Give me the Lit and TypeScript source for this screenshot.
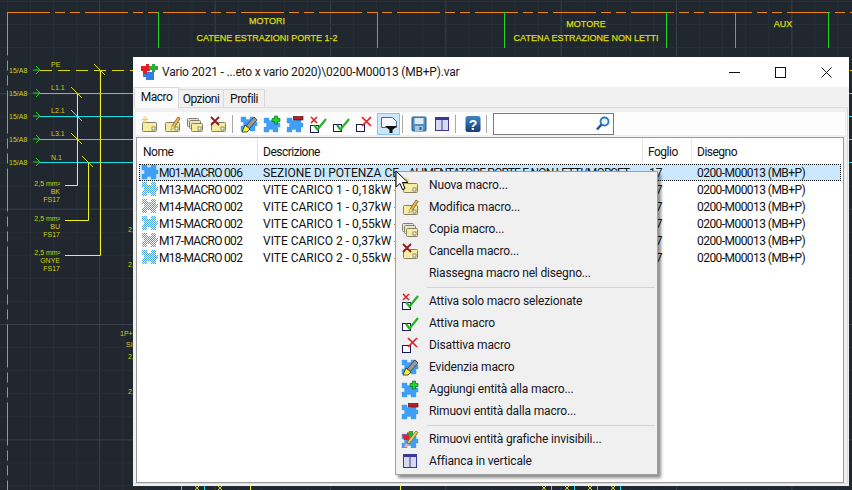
import { LitElement, html, css, svg } from "lit";
import { customElement } from "lit/decorators.js";

const wrap = (c: unknown) => html`<svg class="ic" viewBox="0 0 18 18" width="18" height="18">${c}</svg>`;

const card = (x = 2, y = 7, w = 15, h = 10, f = "#f8ec9e") => svg`
  <rect x=${x + .5} y=${y + .5} width=${w - 1} height=${h - 1} rx="1" fill=${f} stroke="#85806a"/>
  <rect x=${x + w - 5} y=${y + h - 5} width="3" height="3" fill="#fff" stroke="#77775f" stroke-width=".8"/>`;

const pz = "M1 1H6V3.500H10V1H15V6H17V10H15V15H10V12.500H6V15H1V10H3.500V6H1z";
const BLUE = "#3f9ff5";
const puzzle = (tx = 0, ty = 0, fill = BLUE) => svg`<path transform="translate(${tx} ${ty})" d=${pz} fill=${fill} stroke=${fill} stroke-width=".4" stroke-linejoin="round"/>`;
const inPuzzle = (x: number, y: number) => {
  const lobe = (x < 6 || x >= 10) && x >= 1 && x < 15;
  const mid = x >= 3 && x < 15 && y >= 6 && y < 10;
  const center = x >= 6 && x < 10 && y >= 4 && y < 12;
  const nub = x >= 15 && x < 17 && y >= 6 && y < 10;
  return (lobe && y >= 1 && y < 15 && (x >= 3 || y < 6 || y >= 10)) || mid || center || nub;
};
const dimCells: [number, number][] = [];
for (let y = 0; y < 16; y++) for (let x = 0; x < 18; x++) if ((x + y) % 2 === 0 && inPuzzle(x, y)) dimCells.push([x, y]);
const dimPuzzle = svg`${dimCells.map(([x, y]) => svg`<rect x=${x} y=${y} width="1" height="1" fill=${BLUE}/>`)}`;

const pencil = svg`<path d="M8 15l1-4 6-9 2.200 1.400-6 9.200z" fill="#f2b84a" stroke="#70582a" stroke-width=".8"/><path d="M8 15l1-4 2.200 1.600z" fill="#f8e8c0"/>`;
const redX = (x: number, y: number, s: number, c = "#ee1c1c", w = 1.7) => svg`<path d="M${x} ${y}l${s} ${s}M${x + s} ${y}l-${s} ${s}" stroke=${c} stroke-width=${w} fill="none"/>`;
const check = (dy = 0) => svg`<path transform="translate(0 ${dy})" d="M5 9l3.500 4.500L17 3" stroke="#22b32a" stroke-width="2.200" fill="none"/>`;
const box = (y: number) => svg`<rect x="1.500" y=${y + .5} width="8" height="7" fill="#fff" stroke="#1a1a55"/>`;

const icons: Record<string, () => unknown> = {
  nuova: () => wrap(svg`${card()}<path d="M5 1v7M1.500 4.500h7M2.500 2l5 5M7.500 2l-5 5" stroke="#e8d060" stroke-width=".9"/>`),
  modifica: () => wrap(svg`${card(2, 7, 15, 10)}${pencil}`),
  copia: () => wrap(svg`${card(1, 3, 12, 9, "#e6e6e0")}${card(3, 5, 12, 9, "#e9e6cc")}${card(5, 8, 12, 9)}`),
  cancella: () => wrap(svg`${card()}${redX(2, 2, 8, "#8e1c24", 1.8)}`),
  blank: () => wrap(""),
  solo: () => wrap(svg`${box(10)}${redX(2, 2, 6, "#d81c1c", 1.5)}${check(1)}`),
  attiva: () => wrap(svg`${box(9)}${check(1)}`),
  disattiva: () => wrap(svg`${box(9)}${redX(7, 2, 9)}`),
  evidenzia: () => wrap(svg`${puzzle(0, 1)}<path d="M6 11l8-9 3 3-8 9z" fill="#9a9a9a" stroke="#333" stroke-width=".8"/><path d="M2 17l3-7 5 4-3 3z" fill="#fff22e" stroke="#222" stroke-width=".8"/>`),
  aggiungi: () => wrap(svg`${puzzle(0, 2)}<path d="M11.500 1h3v2.500H17v3h-2.500V9h-3V6.500H9v-3h2.500z" fill="#1fd62c" stroke="#075f10" stroke-width=".6"/>`),
  rimuovi: () => wrap(svg`${puzzle(0, 2)}<rect x="7.500" y="1.500" width="9.500" height="3.500" fill="#c01a24" stroke="#3a0808" stroke-width=".6"/>`),
  grafiche: () => wrap(svg`${puzzle(0, 3)}<path d="M1 4.500h5v-2h3l.5 2.500-2 5H3z" fill="#ee1c2c"/><path d="M8 1h4v3l-2 3-3-2z" fill="#2cb02c"/><path d="M6 14l1-3 8-10 2 1.500-8 10.500z" fill="#e8d060" stroke="#6a5a20" stroke-width=".7"/><path d="M3 17l2-4 3 2-2 2z" fill="#f2a8a8"/>`),
  affianca: () => wrap(svg`<rect x="2.500" y="2.500" width="13" height="13" fill="#d8d8ee" stroke="#3a3a96"/><rect x="2" y="2" width="14" height="3" fill="#3a3a96"/><path d="M9 3v12.500" stroke="#3a3a96"/>`),
  filtro: () => wrap(svg`<path d="M1.500 2.500h11l4 4v6h-15z" fill="#f4f8fc" stroke="#5a6a7a"/><path d="M5 11h12l-4.500 4V18h-3v-3z" fill="#111"/>`),
  salva: () => wrap(svg`<rect x="2" y="2" width="14" height="14" rx="1" fill="#4f8fc5" stroke="#2a5c8c"/><rect x="4.500" y="3" width="9" height="6" fill="#dfe9f2"/><rect x="5" y="11" width="8" height="5" fill="#a8c8e2"/><rect x="9.500" y="12" width="2" height="3" fill="#2a5c8c"/>`),
  aiuto: () => wrap(svg`<defs><linearGradient id="hb" x1="0" y1="0" x2="0" y2="1"><stop offset="0" stop-color="#3f86c6"/><stop offset="1" stop-color="#123f78"/></linearGradient></defs><rect x="1.500" y="1" width="15" height="16" rx="2.500" fill="url(#hb)"/><text x="9" y="14.500" text-anchor="middle" font-family="Liberation Sans" font-weight="700" font-size="14" fill="#fff">?</text>`),
  cerca: () => wrap(svg`<circle cx="10.500" cy="6.500" r="4" fill="#e8f3fc" stroke="#2a78c0" stroke-width="1.800"/><path d="M7.500 9.500L3 14.500" stroke="#1f4f8f" stroke-width="2.400"/>`),
  titolo: () => wrap(svg`<rect x="6" y="9" width="8" height="8" fill="#2f7fe6"/><rect x="3" y="11" width="6" height="3" fill="#2f7fe6"/><path d="M1 3h5V1h3v2h1v5H7v3H3V8H1z" fill="#e81c24"/><path d="M9 3h3V1h3v2h3v4h-3v2h-3V7H9z" fill="#2cae3c"/>`),
};

const pzIcon = (active: boolean) => wrap(active ? puzzle(0, 0) : dimPuzzle);

const rows = [
  ["M01-MACRO 006", "SEZIONE DI POTENZA CE - ", "ALIMENTATORE PORTE E NON LETTI/MORSET"],
  ["M13-MACRO 002", "VITE CARICO 1 - 0,18kW - ", "MOTORE"],
  ["M14-MACRO 002", "VITE CARICO 1 - 0,37kW - ", "MOTORE"],
  ["M15-MACRO 002", "VITE CARICO 1 - 0,55kW - ", "MOTORE"],
  ["M17-MACRO 002", "VITE CARICO 2 - 0,37kW - ", "MOTORE"],
  ["M18-MACRO 002", "VITE CARICO 2 - 0,55kW - ", "MOTORE"],
];

type MenuEntry = { i?: string; t?: string; sep?: boolean };
const menu: MenuEntry[] = [
  { i: "nuova", t: "Nuova macro..." },
  { i: "modifica", t: "Modifica macro..." },
  { i: "copia", t: "Copia macro..." },
  { i: "cancella", t: "Cancella macro..." },
  { i: "blank", t: "Riassegna macro nel disegno..." },
  { sep: true },
  { i: "solo", t: "Attiva solo macro selezionate" },
  { i: "attiva", t: "Attiva macro" },
  { i: "disattiva", t: "Disattiva macro" },
  { i: "evidenzia", t: "Evidenzia macro" },
  { i: "aggiungi", t: "Aggiungi entità alla macro..." },
  { i: "rimuovi", t: "Rimuovi entità dalla macro..." },
  { sep: true },
  { i: "grafiche", t: "Rimuovi entità grafiche invisibili..." },
  { i: "affianca", t: "Affianca in verticale" },
];

const Y = "#d8d80c";
const canvas = () => {
  const g: unknown[] = [];
  for (let i = 0; i < 38; i++) {
    const x = 7.5 + i * 23.07;
    const maj = Math.round((x - 100) / 23.07) % 5 === 0;
    g.push(svg`<line x1=${x} y1="0" x2=${x} y2="490" stroke=${maj ? "#3a414d" : "#282f39"}/>`);
  }
  for (let i = 0; i < 23; i++) {
    const y = 1.5 + i * 23.07;
    const maj = Math.round((y - 324) / 23.07) % 5 === 0;
    g.push(svg`<line x1="0" y1=${y} x2="852" y2=${y} stroke=${maj ? "#3a414d" : "#282f39"}/>`);
  }
  const t = (x: number, y: number, s: string, anchor = "start") =>
    svg`<text class="small" x=${x} y=${y} text-anchor=${anchor}>${s}</text>`;
  const big = (x: number, y: number, s: string) =>
    svg`<text class="big" x=${x} y=${y} text-anchor="middle">${s}</text>`;
  const arrow = (y: number) => svg`<path d="M33 ${y}h7M36 ${y - 4}l4 4-4 4" stroke="#22d422" fill="none"/><text class="small" x="9" y=${y + 2.500}>15/A8</text>`;
  const tick = (x: number, y: number) => svg`<path d="M${x - 6} ${y - 6}l11 11" stroke=${Y}/>`;
  return svg`
    ${g}
    <path d="M7 12.500H852" stroke="#f08410" stroke-width="1.200" stroke-dasharray="43 5 10 5 10 5"/>
    <path d="M7.500 12.500V490" stroke="#f08410" stroke-dasharray="43 5 10 5 10 5"/>
    ${[158, 377, 504, 666, 735, 828].map((x) => svg`<line x1=${x + .5} y1="12" x2=${x + .5} y2="48" stroke="#22d422"/>`)}
    ${big(267, 24, "MOTORI")}
    ${big(267, 41, "CATENE ESTRAZIONI PORTE 1-2")}
    ${big(586, 27, "MOTORE")}
    ${big(586, 41, "CATENA ESTRAZIONE NON LETTI")}
    ${big(783, 27, "AUX")}
    ${[70, 93, 116, 139, 162].map(arrow)}
    <path d="M40 70.500H133" stroke=${Y} stroke-dasharray="12 6"/>
    ${[93, 116, 139, 162].map((y) => svg`<line x1="40" y1=${y + .5} x2="852" y2=${y + .5} stroke="#18e0e0"/>`)}
    <line x1="850" y1="70.500" x2="852" y2="70.500" stroke=${Y}/>
    ${t(51, 67, "PE")}${t(51, 90, "L1.1")}${t(51, 113, "L2.1")}${t(51, 136, "L3.1")}${t(51, 160, "N.1")}
    <path d="M100.500 70V255.500H65M77.500 93V185.500H65M88.500 162V220.500H65" stroke="#f2f21c" fill="none"/>
    ${tick(100, 70)}${tick(77, 93)}${tick(77, 116)}${tick(77, 139)}${tick(88, 162)}
    ${t(60, 186, "2,5 mm²", "end")}${t(60, 194, "BK", "end")}${t(60, 202, "FS17", "end")}
    ${t(60, 221, "2,5 mm²", "end")}${t(60, 229, "BU", "end")}${t(60, 237, "FS17", "end")}
    ${t(60, 255, "2,5 mm²", "end")}${t(60, 263, "GNYE", "end")}${t(60, 271, "FS17", "end")}
    ${[232, 267, 359, 394].map((y) => t(128, y, "2,"))}
    ${t(120, 336, "1P+N")}${t(126, 347, "SIE")}
    ${[181.500, 204.500, 551.500, 574.500, 597.500, 620.500].map((x) => svg`<line x1=${x} y1="486" x2=${x} y2="490" stroke="#18e0e0"/>`)}
    ${[250.500, 400.500].map((x) => svg`<line x1=${x} y1="486" x2=${x} y2="490" stroke="#f2f21c"/>`)}
    ${[197, 220, 544, 567, 590, 613].map((x) => svg`<path d="M${x - 2} 486l4 4M${x + 2} 486l-4 4" stroke=${Y}/>`)}
  `;
};

@customElement("app-root")
export class AppRoot extends LitElement {
  static styles = css`
    :host { display: block; position: relative; width: 852px; height: 490px; overflow: hidden; background: #20272f; font-family: Roboto, sans-serif; font-size: 12px; color: #111; }
    .canvas { position: absolute; inset: 0; display: block; }
    .canvas text { font-family: "Liberation Sans", sans-serif; }
    .canvas .big { font-size: 9px; fill: #dcdc0c; stroke: #dcdc0c; stroke-width: .25px; }
    .canvas .small { font-size: 7px; fill: #cfcf10; }
    .window { position: absolute; left: 133px; top: 57px; width: 716px; height: 429px; background: #f0f0f0; display: flex; flex-direction: column; }
    .title { height: 30px; background: #fff; display: flex; align-items: center; flex: none; }
    .title .logo { margin: 0 4px 0 7px; display: flex; }
    .title .text { flex: 1; white-space: nowrap; color: #1a1a1a; letter-spacing: -.19px; }
    .winbtn { width: 46px; height: 30px; display: flex; align-items: center; justify-content: center; flex: none; }
    .tabs { height: 20px; display: flex; align-items: flex-end; flex: none; padding-left: 1px; position: relative; z-index: 1; letter-spacing: -.5px; }
    .tab { height: 18px; display: flex; align-items: center; justify-content: center; background: #f0f0f0; border: 1px solid #d9d9d9; border-bottom: none; box-sizing: border-box; margin-left: -1px; }
    .tab.active { height: 21px; margin-bottom: -1px; background: #fbfbfb; width: 45px; margin-left: 0; padding-bottom: 2px; }
    .tab.o { width: 46px; }
    .tab.p { width: 42px; }
    .pane { flex: 1; margin: 0 1px 2px 1px; border: 1px solid #dcdcdc; border-left: none; padding: 4px 2px 0 2px; display: flex; flex-direction: column; min-height: 0; }
    .toolbar { height: 23px; background: #fdfdfd; display: flex; align-items: center; padding-left: 1.500px; flex: none; margin-bottom: 2px; }
    .tb { width: 23px; height: 22px; display: flex; align-items: center; justify-content: center; flex: none; box-sizing: border-box; }
    .tb.sel { background: #cde6f9; border: 1px solid #8ec3ec; margin-left: 1.500px; }
    .sep { width: 1px; height: 18px; background: #a8a8a8; flex: none; }
    .sep.a { margin: 0 4.500px 0 2.500px; }
    .sep.c { margin: 0 4px 0 2px; }
    .sep.b { margin: 0 5px 0 2px; }
    .search { width: 121px; height: 22px; margin-left: .5px; box-sizing: border-box; border: 1px solid #7a7a7a; background: #fff; display: flex; align-items: center; justify-content: flex-end; padding-right: 1px; }
    .list { flex: 1; background: #fff; border: 1px solid #9a9a9a; min-height: 0; margin-right: 1px; }
    .head { height: 25px; display: grid; grid-template-columns: 121px 385px 49px 1fr; align-items: stretch; border-bottom: 1px solid #fff; letter-spacing: -.5px; }
    .head div { display: flex; align-items: center; padding: 2px 0 0 5px; border-right: 1px solid #e5e5e5; }
    .head div:first-child { padding-left: 6px; }
    .head div:last-child { border-right: none; }
    .rowbox { padding: 0 2px; }
    .row { height: 17px; display: grid; grid-template-columns: 124px 384px 50px 1fr; align-items: center; white-space: nowrap; box-sizing: border-box; }
    .row.sel { background: #cce8ff; outline: 1px dotted #111; outline-offset: -1px; }
    .cell { overflow: hidden; }
    .name { display: flex; align-items: center; padding-left: 2px; letter-spacing: -.7px; }
    .tail { letter-spacing: -.8px; }
    .fg { padding-left: 2px; }
    .dis { letter-spacing: -.55px; }
    .menu { position: absolute; left: 395px; top: 171px; width: 263px; box-sizing: border-box; background: #f0f0f0; border: 1px solid #a0a0a0; padding: 2px 0; box-shadow: 3px 3px 3px rgba(0,0,0,.45); }
    .mi { height: 22px; display: flex; align-items: center; padding-left: 5px; gap: 10px; white-space: nowrap; color: #15151f; letter-spacing: -.15px; }
    .msep { height: 1px; margin: 2.500px 2px 2.500px 31px; background: #d4d4d4; }
    .ic { display: block; flex: none; }
    .cursor { position: absolute; left: 395px; top: 170px; display: block; }
  `;

  render() {
    return html`
      <svg class="canvas" width="852" height="490" viewBox="0 0 852 490">${canvas()}</svg>
      <div class="window">
        <div class="title">
          <span class="logo">${icons.titolo()}</span>
          <span class="text">Vario 2021 - ...eto x vario 2020)\\0200-M00013 (MB+P).var</span>
          <span class="winbtn"><svg width="11" height="11"><line x1="0" y1="5.500" x2="11" y2="5.500" stroke="#111"/></svg></span>
          <span class="winbtn"><svg width="11" height="11"><rect x=".5" y=".5" width="10" height="10" fill="none" stroke="#111"/></svg></span>
          <span class="winbtn"><svg width="11" height="11"><path d="M.5 .5l10 10M10.500 .5l-10 10" stroke="#111" fill="none"/></svg></span>
        </div>
        <div class="tabs">
          <div class="tab active">Macro</div>
          <div class="tab o">Opzioni</div>
          <div class="tab p">Profili</div>
        </div>
        <div class="pane">
          <div class="toolbar">
            ${["nuova", "modifica", "copia", "cancella"].map((k) => html`<span class="tb">${icons[k]()}</span>`)}
            <span class="sep a"></span>
            ${["evidenzia", "aggiungi", "rimuovi", "solo", "attiva", "disattiva"].map((k) => html`<span class="tb">${icons[k]()}</span>`)}
            <span class="tb sel">${icons.filtro()}</span>
            <span class="sep c"></span>
            <span class="tb">${icons.salva()}</span>
            <span class="tb">${icons.affianca()}</span>
            <span class="sep b"></span>
            <span class="tb">${icons.aiuto()}</span>
            <span class="sep b"></span>
            <span class="search">${icons.cerca()}</span>
          </div>
          <div class="list">
            <div class="head">
              <div>Nome</div><div>Descrizione</div><div>Foglio</div><div>Disegno</div>
            </div>
            <div class="rowbox">
              ${rows.map((r, i) => html`
                <div class="row ${i === 0 ? "sel" : ""}">
                  <div class="cell name">${pzIcon(i === 0)}<span>${r[0]}</span></div>
                  <div class="cell">${r[1]}<span class="tail">${r[2]}</span></div>
                  <div class="cell fg">17</div>
                  <div class="cell dis">0200-M00013 (MB+P)</div>
                </div>`)}
            </div>
          </div>
        </div>
      </div>
      <div class="menu">
        ${menu.map((m) => m.sep ? html`<div class="msep"></div>` : html`<div class="mi">${icons[m.i!]()}<span>${m.t}</span></div>`)}
      </div>
      <svg class="cursor" width="14" height="22" viewBox="0 0 14 22"><path d="M1 1v16l4-3.500 2.500 6 2.500-1-2.500-6H13z" fill="#fff" stroke="#000"/></svg>
    `;
  }
}
